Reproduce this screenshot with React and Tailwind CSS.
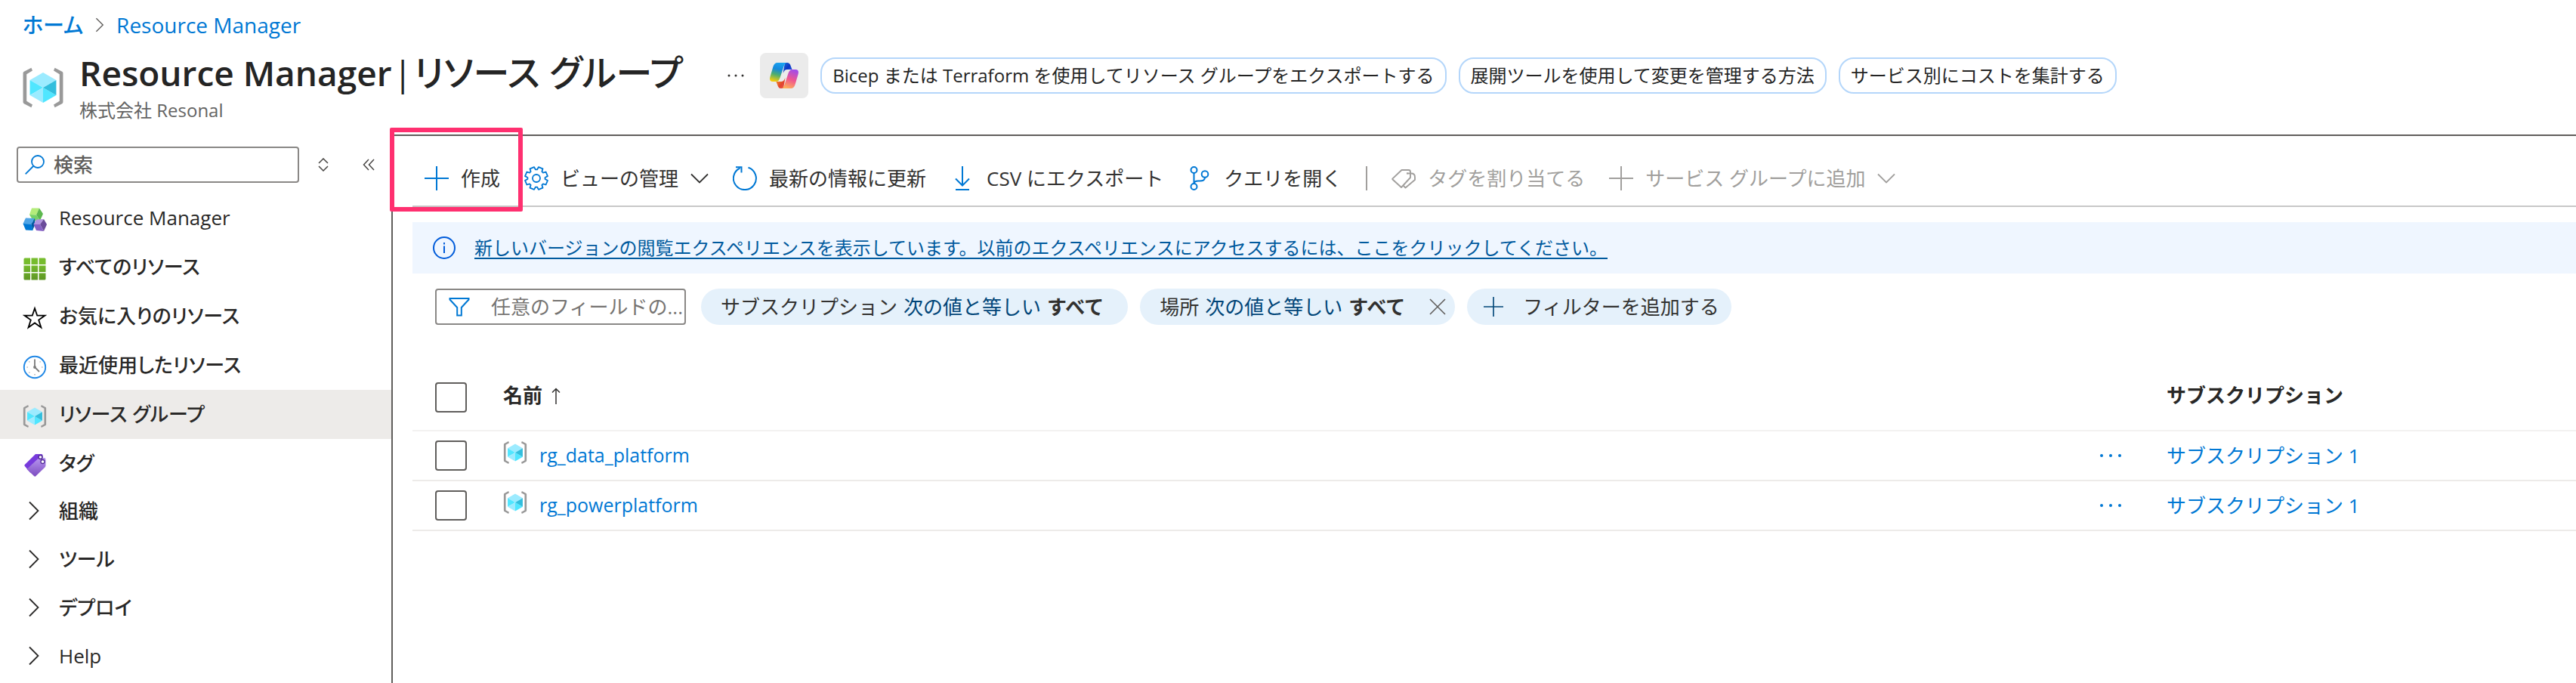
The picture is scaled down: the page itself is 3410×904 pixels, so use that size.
import React from "react";

const LINK = "text-[#0078d4]";

function ResourceGroupIcon({ className }) {
  return (
    <svg viewBox="0 0 18 18" className={className} aria-hidden="true">
      <path d="M4 .6.9 2.2Q.5 2.4.5 2.9V15.1Q.5 15.6.9 15.8L4 17.4 4.5 16.2 2 14.7V3.3L4.5 1.8Z" fill="#999" />
      <path d="M14 .6 17.1 2.2Q17.5 2.4 17.5 2.9V15.1Q17.5 15.6 17.1 15.8L14 17.4 13.5 16.2 16 14.7V3.3L13.5 1.8Z" fill="#999" />
      <path d="M9 2.6 14.6 5.8 9 9 3.4 5.8Z" fill="#9cebff" />
      <path d="M3.4 5.8 9 9 3.4 12.2Z" fill="#50e6ff" />
      <path d="M3.4 12.2 9 9V15.4Z" fill="#9cebff" />
      <path d="M14.6 12.2 9 9V15.4Z" fill="#50e6ff" />
      <path d="M14.6 5.8V12.2L9 9Z" fill="#32bedd" />
    </svg>
  );
}

function CubesIcon() {
  return (
    <svg viewBox="0 0 32 32" className="size-8 shrink-0" aria-hidden="true">
      <path d="M12 .5 22 .5 18 9.5 9 9Z" fill="#b4ec7a" />
      <path d="M22 .5 27 8 23 17 18 9.5Z" fill="#5db84f" />
      <path d="M9 9 18 9.5 23 17 14 17.5Z" fill="#76d165" />
      <path d="M4 13.5 16 14 11.5 21.5.5 21Z" fill="#50a5e6" />
      <path d="M16 14 16.5 22 13 30 11.5 21.5Z" fill="#005ba1" />
      <path d="M.5 21 11.5 21.5 13.5 30 4 29.5Z" fill="#0078d4" />
      <path d="M18 15.5 28 15 23 22 14.5 22Z" fill="#b296e0" />
      <path d="M28 15 32 22 28 31 23 22Z" fill="#6b4c9a" />
      <path d="M14.5 22 23 22 28 31 18 30Z" fill="#8661c5" />
    </svg>
  );
}

function GridIcon() {
  return (
    <svg viewBox="0 0 32 32" className="size-8 shrink-0" aria-hidden="true">
      <defs>
        <linearGradient id="grid-g" x1="0" y1="0" x2="0" y2="1">
          <stop offset="0.3" stopColor="#76bc2d" />
          <stop offset="1" stopColor="#5e9624" />
        </linearGradient>
      </defs>
      <path fill="url(#grid-g)" d="M3 1.500H10V10H1.500V3Q1.500 1.500 3 1.500ZM11.500 1.500H20V10H11.500ZM21.500 1.500H29Q30.500 1.500 30.500 3V10H21.500ZM1.500 11.500H10V20H1.500ZM11.500 11.500H20V20H11.500ZM21.500 11.500H30.500V20H21.500ZM1.500 21.500H10V30.500H3Q1.500 30.500 1.500 29ZM11.500 21.500H20V30.500H11.500ZM21.500 21.500H30.500V29Q30.500 30.500 29 30.500H21.500Z" />
    </svg>
  );
}

function StarIcon() {
  return (
    <svg viewBox="0 0 32 32" className="size-8 shrink-0" fill="none" stroke="#000" strokeWidth="1.8" aria-hidden="true">
      <path d="M16 3 19.200 12.600H29.500L21.200 18.600 24.400 28.500 16 22.400 7.600 28.500 10.800 18.600 2.500 12.600H12.800Z" />
    </svg>
  );
}

function ClockIcon() {
  return (
    <svg viewBox="0 0 32 32" className="size-8 shrink-0" fill="none" aria-hidden="true">
      <circle cx="16" cy="16" r="14.200" stroke="#1f87e5" strokeWidth="1.900" fill="#fff" />
      <path d="M16 5.500V16L22 22" stroke="#7a7a7a" strokeWidth="1.800" />
      <circle cx="16" cy="16" r="1.900" fill="#7a7a7a" />
      <path d="M16 25V26.500M5.500 16H7M25 16H26.500M8.500 8.500 9.300 9.300M23.500 8.500 22.700 9.300M8.500 23.500 9.300 22.700" stroke="#999" strokeWidth="1.200" />
    </svg>
  );
}

function PurpleTagIcon() {
  return (
    <svg viewBox="0 0 32 32" className="size-8 shrink-0" aria-hidden="true">
      <defs>
        <linearGradient id="tag-g" x1="0" y1="0" x2="0" y2="1">
          <stop offset="0" stopColor="#b796f0" />
          <stop offset="1" stopColor="#7d4cc0" />
        </linearGradient>
      </defs>
      <path d="M17 1H25Q26.500 1 26.500 2.500V10L11.500 25Q10.500 26 9.500 25L2.800 17Q1.800 16 2.800 15Z" fill="#773adc" />
      <path d="M21.500 6H28.500Q30.500 6 30.500 8V16Q30.500 17 29.500 18.500L17.500 30Q16.300 31.300 15 30L5.500 21Z" fill="url(#tag-g)" />
      <circle cx="23.500" cy="5" r="2.500" fill="#fff" stroke="#552f99" strokeWidth="1.500" />
      <circle cx="26.500" cy="11" r="2.500" fill="#fff" stroke="#552f99" strokeWidth="1.300" />
    </svg>
  );
}

function ChevronRight({ className, stroke = "#292827" }) {
  return (
    <svg viewBox="0 0 14 26" className={className} fill="none" stroke={stroke} strokeWidth="1.800" aria-hidden="true">
      <path d="M1 1.500 12.500 13 1 24.500" />
    </svg>
  );
}

function ChevronDown() {
  return (
    <svg viewBox="0 0 24 14" className="w-6 shrink-0" fill="none" stroke="currentColor" strokeWidth="1.800" aria-hidden="true">
      <path d="M1 1.500 12 12.500 23 1.500" />
    </svg>
  );
}

function Plus({ className }) {
  return (
    <svg viewBox="0 0 32 32" className={className} fill="none" stroke="currentColor" strokeWidth="2" aria-hidden="true">
      <path d="M0 16H32M16 0V32" />
    </svg>
  );
}

function GearIcon() {
  const pts = [];
  for (let i = 0; i < 8; i++) {
    const c = (i * Math.PI) / 4 + Math.PI / 8;
    [
      [-0.3, 11.6],
      [-0.2, 15.2],
      [0.2, 15.2],
      [0.3, 11.6],
    ].forEach(([a, r]) => {
      pts.push(`${(16 + r * Math.cos(c + a)).toFixed(2)},${(16 + r * Math.sin(c + a)).toFixed(2)}`);
    });
  }
  return (
    <svg viewBox="0 0 32 32" className={`size-8 shrink-0 ${LINK}`} fill="none" stroke="currentColor" strokeWidth="1.800" aria-hidden="true">
      <polygon points={pts.join(" ")} strokeLinejoin="round" />
      <circle cx="16" cy="16" r="5" />
    </svg>
  );
}

function RefreshIcon() {
  return (
    <svg viewBox="0 0 32 32" className={`size-8 shrink-0 ${LINK}`} fill="none" stroke="currentColor" strokeWidth="2" aria-hidden="true">
      <path d="M20.500 1.800A15 15 0 1 1 9.500 2.500" />
      <path d="M4 1.200H11.500V8.500" />
    </svg>
  );
}

function DownloadIcon() {
  return (
    <svg viewBox="0 0 32 32" className={`size-8 shrink-0 ${LINK}`} fill="none" stroke="currentColor" strokeWidth="2" aria-hidden="true">
      <path d="M16 0V25M7 16.500 16 25.500 25 16.500M7 31H25" />
    </svg>
  );
}

function BranchIcon() {
  return (
    <svg viewBox="0 0 32 32" className={`size-8 shrink-0 ${LINK}`} fill="none" stroke="currentColor" strokeWidth="2" aria-hidden="true">
      <circle cx="8.500" cy="5" r="4" />
      <circle cx="8.500" cy="27" r="4" />
      <circle cx="23" cy="10.500" r="4.300" />
      <path d="M8.500 9V23M23 15C23 19 20 19.500 16 19.500H14C10 19.500 8.500 20.500 8.500 23" />
    </svg>
  );
}

function TagOutlineIcon() {
  return (
    <svg viewBox="0 0 32 32" className="size-8 shrink-0" fill="none" stroke="currentColor" strokeWidth="1.900" strokeLinejoin="round" aria-hidden="true">
      <path d="M13.500 5H22.500Q25 5 25 7.500V15L13 28 1.500 17.500Q1 17 1.500 16.400Z" />
      <path d="M20 9.500H26Q31 9.500 31 14.500V18L18.500 28.500 15.500 25.600" />
      <circle cx="21" cy="9.500" r="1" fill="currentColor" stroke="none" />
    </svg>
  );
}

function CopilotIcon() {
  return (
    <svg viewBox="0 0 38 34" className="w-[38px]" aria-hidden="true">
      <defs>
        <linearGradient id="cp-a" x1="0.600" y1="0" x2="0.350" y2="1">
          <stop offset="0" stopColor="#1aa3f0" />
          <stop offset="0.350" stopColor="#1488dc" />
          <stop offset="0.650" stopColor="#4fae6e" />
          <stop offset="1" stopColor="#f5cc0c" />
        </linearGradient>
        <linearGradient id="cp-b" x1="0" y1="0" x2="1" y2="1">
          <stop offset="0" stopColor="#1b6fd8" />
          <stop offset="0.500" stopColor="#0a35c4" />
          <stop offset="1" stopColor="#2a62ea" />
        </linearGradient>
        <linearGradient id="cp-c" x1="0.650" y1="0" x2="0.300" y2="1">
          <stop offset="0" stopColor="#a34be8" />
          <stop offset="0.500" stopColor="#f0568f" />
          <stop offset="1" stopColor="#ffb357" />
        </linearGradient>
        <linearGradient id="cp-d" x1="0" y1="0" x2="1" y2="1">
          <stop offset="0" stopColor="#f8a01c" />
          <stop offset="0.600" stopColor="#e2442f" />
          <stop offset="1" stopColor="#ee5a50" />
        </linearGradient>
      </defs>
      <path d="M20 0H23.500Q26 0 27 2.500L29.500 9H24C20 9 19.500 10 17.500 14Z" fill="url(#cp-b)" />
      <path d="M18 34H14.500Q12 34 11 31.500L8.500 25H14C18 25 18.500 24 20.500 20Z" fill="url(#cp-d)" />
      <path d="M10.500 0H23C20.500 0 19.500 2 18.500 5L13.500 20C12.500 23 11 25 8 25H4C0 25-.5 22 .5 18.500L4.500 5C5.500 2 7 0 10.500 0Z" fill="url(#cp-a)" />
      <path d="M27.500 34H15C17.500 34 18.500 32 19.500 29L24.500 14C25.500 11 27 9 30 9H34C38 9 38.500 12 37.500 15.500L33.500 29C32.500 32 31 34 27.500 34Z" fill="url(#cp-c)" />
    </svg>
  );
}

const navItems = [
  { label: "Resource Manager", icon: <CubesIcon /> },
  { label: "すべてのリソース", icon: <GridIcon /> },
  { label: "お気に入りのリソース", icon: <StarIcon /> },
  { label: "最近使用したリソース", icon: <ClockIcon /> },
  { label: "リソース グループ", icon: <ResourceGroupIcon className="size-8 shrink-0" />, active: true },
  { label: "タグ", icon: <PurpleTagIcon /> },
];

const navGroups = ["組織", "ツール", "デプロイ", "Help"];

const suggestions = [
  "Bicep または Terraform を使用してリソース グループをエクスポートする",
  "展開ツールを使用して変更を管理する方法",
  "サービス別にコストを集計する",
];

const groups = ["rg_data_platform", "rg_powerplatform"];

function ToolButton({ icon, children, disabled, menu }) {
  return (
    <button type="button" disabled={disabled} className="flex h-10 shrink-0 items-center gap-4 text-[26px] whitespace-nowrap disabled:text-[#a19f9d]">
      {icon}
      {children}
      {menu && <ChevronDown />}
    </button>
  );
}

function Checkbox({ label }) {
  return (
    <input
      type="checkbox"
      aria-label={label}
      className="block h-10 w-[42px] appearance-none rounded-[4px] border-2 border-[#605e5c] bg-white checked:bg-[#0078d4]"
    />
  );
}

function Header() {
  return (
    <header className="h-[178px] shrink-0">
      <nav aria-label="breadcrumb" className="flex h-[66px] items-center gap-4 pl-[30px] text-[28px]">
        <a href="#home" className={`font-medium ${LINK} [font-feature-settings:'palt']`}>ホーム</a>
        <ChevronRight className="h-5 w-3" stroke="#605e5c" />
        <a href="#rm" className={LINK}>Resource Manager</a>
      </nav>
      <div className="flex gap-5 pt-1 pl-[29px]">
        <ResourceGroupIcon className="mt-[18px] size-14 shrink-0" />
        <div>
          <div className="flex h-[60px] items-center">
            <h1 className="flex gap-[2px] pb-2 text-[46px] leading-[60px] font-semibold whitespace-nowrap text-[#242424] [font-feature-settings:'palt']">
              <span>Resource Manager</span>
              <span className="font-normal">|</span>
              <span className="text-[48px] font-medium">リソース グループ</span>
            </h1>
            <button type="button" aria-label="その他" className="ml-[54px] flex w-8 justify-center">
              <svg viewBox="0 0 24 4" className="w-6" fill="#323130" aria-hidden="true">
                <circle cx="3" cy="2" r="1.500" />
                <circle cx="12" cy="2" r="1.500" />
                <circle cx="21" cy="2" r="1.500" />
              </svg>
            </button>
            <button type="button" aria-label="Copilot" className="ml-4 flex h-[60px] w-16 shrink-0 items-center justify-center rounded-lg bg-[#ebebeb]">
              <CopilotIcon />
            </button>
            <div className="ml-4 flex gap-4">
              {suggestions.map((s) => (
                <button key={s} type="button" className="h-12 rounded-[20px] border-2 border-[#b4d6fa] px-[14px] text-[24px] leading-8 whitespace-nowrap text-[#242424]">
                  {s}
                </button>
              ))}
            </div>
          </div>
          <p className="text-[24px] leading-8 text-[#646464]">株式会社 Resonal</p>
        </div>
      </div>
    </header>
  );
}

function Sidebar() {
  return (
    <aside className="w-[518px] shrink-0 pt-4 text-[26px] font-medium">
      <div className="flex items-center pl-[22px]">
        <label className="flex h-12 w-[374px] items-center gap-3 rounded-[4px] border-2 border-[#8a8886] pl-[9px]">
          <svg viewBox="0 0 26 26" className={`size-[26px] shrink-0 ${LINK}`} fill="none" stroke="currentColor" strokeWidth="1.800" aria-hidden="true">
            <circle cx="17" cy="9" r="8" />
            <path d="M11.500 14.500.7 25.300" />
          </svg>
          <input type="text" aria-label="検索" placeholder="検索" className="w-full min-w-0 outline-none placeholder:text-[#605e5c]" />
        </label>
        <button type="button" aria-label="並べ替え" className="ml-6">
          <svg viewBox="0 0 16 18" className="w-4" fill="none" stroke="#484644" strokeWidth="1.500" aria-hidden="true">
            <path d="M2 7 8 1 14 7M2 11 8 17 14 11" />
          </svg>
        </button>
        <button type="button" aria-label="折りたたむ" className="ml-11">
          <svg viewBox="0 0 16 16" className="w-4" fill="none" stroke="#484644" strokeWidth="1.500" aria-hidden="true">
            <path d="M8 1 1.500 8 8 15M15 1 8.500 8 15 15" />
          </svg>
        </button>
      </div>
      <nav className="mt-[14px] text-[#292827] [font-feature-settings:'palt']">
        {navItems.map((n) => (
          <a
            key={n.label}
            href="#nav"
            aria-current={n.active ? "page" : undefined}
            className={`flex h-[65px] items-center gap-4 pl-[30px] ${n.active ? "bg-[#edebe9]" : ""}`}
          >
            <span className="pt-1">{n.icon}</span>
            {n.label}
          </a>
        ))}
        {navGroups.map((g) => (
          <button key={g} type="button" className="flex h-16 w-full items-center gap-[26px] pb-1 pl-[38px] text-left">
            <ChevronRight className="h-[26px] w-[14px]" />
            {g}
          </button>
        ))}
      </nav>
    </aside>
  );
}

function Toolbar() {
  return (
    <div className="ml-[26px] flex h-[94px] items-center gap-8 border-b-2 border-[#c8c8c8] pt-5 pl-4 text-[#323130]">
      <div className="relative">
        <ToolButton icon={<Plus className={`size-8 shrink-0 ${LINK}`} />}>作成</ToolButton>
        <span className="pointer-events-none absolute -top-[47px] -right-[30px] -bottom-6 -left-[46px] rounded-[2px] border-[6px] border-[#ff3070]" />
      </div>
      <ToolButton icon={<GearIcon />} menu>ビューの管理</ToolButton>
      <ToolButton icon={<RefreshIcon />}>最新の情報に更新</ToolButton>
      <ToolButton icon={<DownloadIcon />}>CSV にエクスポート</ToolButton>
      <ToolButton icon={<BranchIcon />}>クエリを開く</ToolButton>
      <span className="h-8 w-[2px] shrink-0 bg-[#a19f9d]" />
      <ToolButton icon={<TagOutlineIcon />} disabled>タグを割り当てる</ToolButton>
      <ToolButton icon={<Plus className="size-8 shrink-0" />} disabled menu>サービス グループに追加</ToolButton>
    </div>
  );
}

function Filters() {
  const pill = "flex h-12 shrink-0 items-center rounded-full bg-[#e5f1fb] whitespace-nowrap";
  return (
    <div className="mt-5 flex items-center gap-4 pl-14 text-[26px] text-[#323130]">
      <label className="mr-1 flex h-12 w-[332px] items-center gap-7 rounded-[4px] border-2 border-[#8a8886] pl-4">
        <svg viewBox="0 0 28 26" className={`w-7 shrink-0 ${LINK}`} fill="none" stroke="currentColor" strokeWidth="2" aria-hidden="true">
          <path d="M1.500 2H26.500V3.500L16.800 14V24.500H11.200V14L1.500 3.500Z" />
        </svg>
        <input type="text" aria-label="フィルター" placeholder="任意のフィールドの..." className="w-full min-w-0 outline-none placeholder:text-[#767472]" />
      </label>
      <button type="button" className={`${pill} gap-2 pr-8 pl-[26px]`}>
        <span>サブスクリプション</span>
        <span className="text-[#004578]">次の値と等しい</span>
        <strong>すべて</strong>
      </button>
      <div className={`${pill} pr-3 pl-[26px]`}>
        <button type="button" className="flex gap-2">
          <span>場所</span>
          <span className="text-[#004578]">次の値と等しい</span>
          <strong>すべて</strong>
        </button>
        <button type="button" aria-label="削除" className="ml-8">
          <svg viewBox="0 0 22 22" className="w-[22px]" fill="none" stroke="#605e5c" strokeWidth="1.600" aria-hidden="true">
            <path d="M1 1 21 21M21 1 1 21" />
          </svg>
        </button>
      </div>
      <button type="button" className={`${pill} gap-[26px] pr-4 pl-[22px]`}>
        <Plus className="size-[26px] text-[#004578]" />
        フィルターを追加する
      </button>
    </div>
  );
}

function GroupTable() {
  return (
    <div className="mt-[52px] pl-[26px]">
      <table className="w-full table-fixed border-collapse text-left text-[26px] text-[#292827]">
        <colgroup>
          <col className="w-[120px]" />
          <col />
          <col className="w-[90px]" />
          <col className="w-[542px]" />
        </colgroup>
        <thead>
          <tr className="h-[88px] border-b-2 border-[#f3f2f1]">
            <th className="pl-[30px]"><Checkbox label="すべて選択" /></th>
            <th className="pb-1 font-bold">
              <span className="flex items-center gap-3">
                名前
                <svg viewBox="0 0 12 22" className="w-3" fill="none" stroke="#323130" strokeWidth="1.500" aria-hidden="true">
                  <path d="M6 22V1.500M1 6.500 6 1.500 11 6.500" />
                </svg>
              </span>
            </th>
            <th aria-label="操作" />
            <th className="pb-1 font-bold">サブスクリプション</th>
          </tr>
        </thead>
        <tbody>
          {groups.map((g) => (
            <tr key={g} className="h-[66px] border-b-2 border-[#edebe9]">
              <td className="pl-[30px]"><Checkbox label={g} /></td>
              <td>
                <a href="#group" className={`flex items-center gap-4 text-[25px] ${LINK}`}>
                  <ResourceGroupIcon className="mb-2 size-8 shrink-0" />
                  {g}
                </a>
              </td>
              <td>
                <button type="button" aria-label="その他の操作" className="flex">
                  <svg viewBox="0 0 32 6" className={`w-8 ${LINK}`} fill="currentColor" aria-hidden="true">
                    <circle cx="4" cy="3" r="2" />
                    <circle cx="16" cy="3" r="2" />
                    <circle cx="28" cy="3" r="2" />
                  </svg>
                </button>
              </td>
              <td><a href="#sub" className={LINK}>サブスクリプション 1</a></td>
            </tr>
          ))}
        </tbody>
      </table>
    </div>
  );
}

export default function App() {
  return (
    <div className="flex min-h-screen flex-col bg-white font-['Open_Sans','Noto_Sans_CJK_JP',sans-serif] text-[#292827]">
      <Header />
      <div className="flex flex-1">
        <Sidebar />
        <main className="min-w-0 flex-1 border-t-2 border-l-2 border-[#605e5c]">
          <Toolbar />
          <div className="mt-5 ml-[26px] flex h-[68px] items-center gap-6 bg-[#eff6ff] pl-[26px]">
            <svg viewBox="0 0 32 32" className="size-8 shrink-0" fill="none" stroke="#015cda" strokeWidth="2" aria-hidden="true">
              <circle cx="16" cy="16" r="14" />
              <path d="M16 13.500V23M16 9V11.500" />
            </svg>
            <a href="#classic" className="text-[24px] whitespace-nowrap text-[#005a9e] underline decoration-2 underline-offset-4">
              新しいバージョンの閲覧エクスペリエンスを表示しています。以前のエクスペリエンスにアクセスするには、ここをクリックしてください。
            </a>
          </div>
          <Filters />
          <GroupTable />
        </main>
      </div>
    </div>
  );
}
